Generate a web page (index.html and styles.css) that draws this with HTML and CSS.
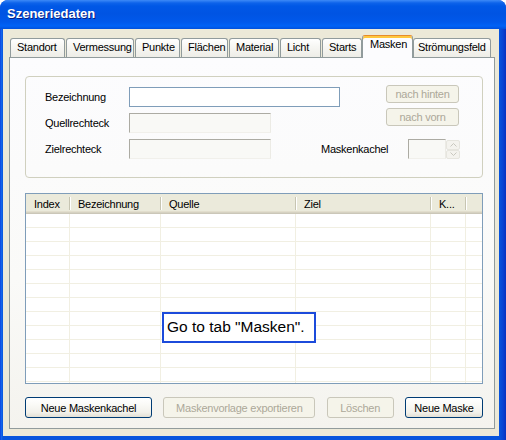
FILE: index.html
```html
<!DOCTYPE html>
<html lang="de">
<head>
<meta charset="utf-8">
<title>Szeneriedaten</title>
<link rel="stylesheet" href="styles.css">
</head>
<body>
<div class="window">
  <div class="titlebar"><span class="title">Szeneriedaten</span></div>
  <div class="client">
    <div class="tabs">
      <div class="tab t-standort">Standort</div>
      <div class="tab t-vermessung">Vermessung</div>
      <div class="tab t-punkte">Punkte</div>
      <div class="tab t-flaechen">Flächen</div>
      <div class="tab t-material">Material</div>
      <div class="tab t-licht">Licht</div>
      <div class="tab t-starts">Starts</div>
      <div class="tab tab-active t-masken">Masken</div>
      <div class="tab t-stroemung">Strömungsfeld</div>
    </div>
    <div class="panel">
      <div class="group">
        <div class="form">
          <div class="lbl row1">Bezeichnung</div>
          <div class="input row1"></div>
          <div class="btn btn-disabled btn-side row1">nach hinten</div>

          <div class="lbl row2">Quellrechteck</div>
          <div class="box row2"></div>
          <div class="btn btn-disabled btn-side btn-front row2">nach vorn</div>

          <div class="lbl row3">Zielrechteck</div>
          <div class="box row3"></div>
          <div class="lbl lbl-mk row3">Maskenkachel</div>
          <div class="spin row3">
            <div class="spin-field"></div>
            <div class="spin-btns">
              <div class="spin-btn"><svg width="7" height="4" viewBox="0 0 7 4"><path d="M0.5 3.5 L3.5 0.5 L6.5 3.5" fill="none" stroke="#C9C8BF" stroke-width="1"/></svg></div>
              <div class="spin-btn"><svg width="7" height="4" viewBox="0 0 7 4"><path d="M0.5 0.5 L3.5 3.5 L6.5 0.5" fill="none" stroke="#C9C8BF" stroke-width="1"/></svg></div>
            </div>
          </div>
        </div>
      </div>

      <div class="list">
        <div class="list-head">
          <div class="hcell c1">Index</div>
          <div class="hcell c2">Bezeichnung</div>
          <div class="hcell c3">Quelle</div>
          <div class="hcell c4">Ziel</div>
          <div class="hcell c5">K...</div>
          <div class="hcell c6"></div>
        </div>
        <div class="list-body">
          <div class="col c1"></div>
          <div class="col c2"></div>
          <div class="col c3"></div>
          <div class="col c4"></div>
          <div class="col c5"></div>
          <div class="col c6"></div>
        </div>
        <div class="hint">Go to tab "Masken".</div>
      </div>

      <div class="actions">
        <div class="btn btn-primary b-kachel">Neue Maskenkachel</div>
        <div class="btn btn-disabled b-export">Maskenvorlage exportieren</div>
        <div class="btn btn-disabled b-delete">Löschen</div>
        <div class="btn btn-primary b-new">Neue Maske</div>
      </div>
    </div>
  </div>
</div>
</body>
</html>
```

FILE: styles.css
```css
* { box-sizing: border-box; }

html, body {
  margin: 0;
  padding: 0;
  background: #ffffff;
}

body {
  width: 506px;
  height: 440px;
  overflow: hidden;
  font-family: "Liberation Sans", Arial, sans-serif;
  font-size: 11px;
  letter-spacing: -0.25px;
  color: #000;
}

.window {
  width: 506px;
  height: 440px;
  display: flex;
  flex-direction: column;
  background: linear-gradient(to right, #0831D9 0, #166AEE 1px, #0855DD 3px, #0855DD 499px, #0842D2 503px, #0831C0 506px);
  border-radius: 8px 8px 0 0;
}

.titlebar {
  height: 29px;
  flex: 0 0 29px;
  display: flex;
  align-items: center;
  padding: 0 0 2px 7px;
  border-radius: 8px 8px 0 0;
  background: linear-gradient(to bottom, #3D8AF7 0, #0D63EA 3px, #0058E6 6px, #0054E3 14px, #0058EB 22px, #0062F6 26px, #0050DC 29px);
}

.title {
  color: #fff;
  font-weight: bold;
  font-size: 13px;
  letter-spacing: 0;
  text-shadow: 1px 1px 0 #0A1E80;
}

.client {
  flex: 1;
  margin: 0 7px 4px 3px;
  background: #ECE9D8;
  padding: 6px 4px 7px 6px;
  display: flex;
  flex-direction: column;
}

/* Tabs */
.tabs {
  height: 22px;
  display: flex;
  align-items: flex-end;
  padding-left: 1px;
}

.tab {
  height: 19px;
  line-height: 17px;
  padding-left: 6px;
  margin-right: 1px;
  border: 1px solid #919B9C;
  border-bottom: none;
  border-radius: 3px 3px 0 0;
  background: linear-gradient(to bottom, #FFFFFF 0, #F7F7F4 40%, #EEEDE7 100%);
  white-space: nowrap;
  overflow: hidden;
}

.t-standort { width: 55px; }
.t-vermessung { width: 68px; }
.t-punkte { width: 45px; }
.t-flaechen { width: 47px; }
.t-material { width: 50px; }
.t-licht { width: 41px; }
.t-starts { width: 40px; }
.t-masken { width: 51px; }
.t-stroemung { width: 78px; margin-right: 0; padding-left: 4px; }

.tab-active {
  height: 23px;
  margin-left: -1px;
  margin-right: 0;
  margin-bottom: -1px;
  padding-left: 7px;
  position: relative;
  z-index: 1;
  border-top-color: #E68B2C;
  box-shadow: inset 0 2px 0 #FFC73C;
  background: #FCFCFE;
  line-height: 17px;
}

/* Panel */
.panel {
  height: 372px;
  border: 1px solid #919B9C;
  background: linear-gradient(to bottom, #FCFCFE 0, #FAFAF8 60%, #F4F3EE 100%);
  padding: 18px 11px 10px 15px;
  display: flex;
  flex-direction: column;
}

.group {
  height: 102px;
  border: 1px solid #D0D0BF;
  border-radius: 4px;
  padding: 8px 0 18px 19px;
}

.form {
  display: grid;
  grid-template-columns: 84px 142px 50px 65px 22px 52px;
  grid-template-rows: 22px 26px 26px;
}

.lbl {
  line-height: 20px;
  height: 20px;
  align-self: end;
  grid-column: 1;
  white-space: nowrap;
}

.row1 { grid-row: 1; }
.row2 { grid-row: 2; }
.row3 { grid-row: 3; }

.input {
  grid-column: 2 / span 3;
  width: 211px;
  height: 20px;
  align-self: end;
  border: 1px solid #7F9DB9;
  background: #fff;
}

.box {
  grid-column: 2;
  width: 142px;
  height: 20px;
  align-self: end;
  border: 1px solid;
  border-color: #ACABA3 #ECEBE5 #F1F0EB #ACABA3;
  background: #F9F9F6;
}

.lbl-mk { grid-column: 4; }

.btn {
  display: flex;
  align-items: center;
  justify-content: center;
  border-radius: 3px;
  white-space: nowrap;
}

.btn-disabled {
  border: 1px solid #C9C7BA;
  background: #F5F4EA;
  color: #ACA899;
}

.btn-primary {
  border: 1px solid #003C74;
  background: linear-gradient(to bottom, #FFFFFF 0, #FBFBF8 30%, #F2F1EB 75%, #E3E0D5 100%);
  color: #000;
}

.btn-side {
  grid-column: 5 / span 2;
  width: 73px;
  height: 18px;
  align-self: start;
}

.btn-front { margin-top: 1px; }

.spin {
  grid-column: 6;
  align-self: end;
  height: 20px;
  display: flex;
}

.spin-field {
  width: 38px;
  height: 20px;
  border: 1px solid;
  border-color: #ACABA3 #ECEBE5 #F1F0EB #ACABA3;
  background: #F9F9F6;
}

.spin-btns {
  width: 14px;
  height: 19px;
  margin-top: 1px;
  display: flex;
  flex-direction: column;
}

.spin-btn {
  flex: 1;
  display: flex;
  align-items: center;
  justify-content: center;
  background: #F4F3EE;
  border: 1px solid #E6E5DE;
  border-radius: 2px;
}

/* List view */
.list {
  margin-top: 15px;
  height: 191px;
  border: 1px solid #7F9DB9;
  background: #fff;
  position: relative;
  display: flex;
  flex-direction: column;
}

.list-head {
  height: 20px;
  flex: 0 0 20px;
  display: flex;
  background: #EBEADB;
  box-shadow: inset 0 -1px 0 #CBC7B8, inset 0 -2px 0 #D6D2C2, inset 0 -3px 0 #E2DECD;
}

.hcell {
  position: relative;
  line-height: 21px;
  padding-left: 8px;
  white-space: nowrap;
}

.hcell::after {
  content: "";
  position: absolute;
  right: 0;
  top: 3px;
  bottom: 4px;
  width: 1px;
  background: #C7C5B2;
  box-shadow: 1px 0 0 #FFFFFF;
}

.hcell.c6::after { display: none; }

.c1 { width: 44px; }
.c2 { width: 91px; }
.c3 { width: 135px; }
.c4 { width: 135px; }
.c5 { width: 35px; }
.c6 { flex: 1; }

.list-body {
  flex: 1;
  display: flex;
  background: repeating-linear-gradient(to bottom, transparent 0, transparent 13px, #F1EFE2 13px, #F1EFE2 14px);
}

.col {
  border-right: 1px solid #F1EFE2;
}

.col.c6 { border-right: none; }

.hint {
  position: absolute;
  left: 136px;
  top: 118px;
  width: 154px;
  height: 31px;
  border: 2px solid #1C4BDB;
  background: #fff;
  font-size: 15.5px;
  letter-spacing: 0;
  line-height: 26px;
  padding-left: 3px;
  white-space: nowrap;
}

/* Bottom buttons */
.actions {
  margin-top: 13px;
  display: flex;
  justify-content: space-between;
}

.actions .btn { height: 21px; }

.b-kachel { width: 127px; }
.b-export { width: 152px; }
.b-delete { width: 67px; }
.b-new { width: 78px; }
```
